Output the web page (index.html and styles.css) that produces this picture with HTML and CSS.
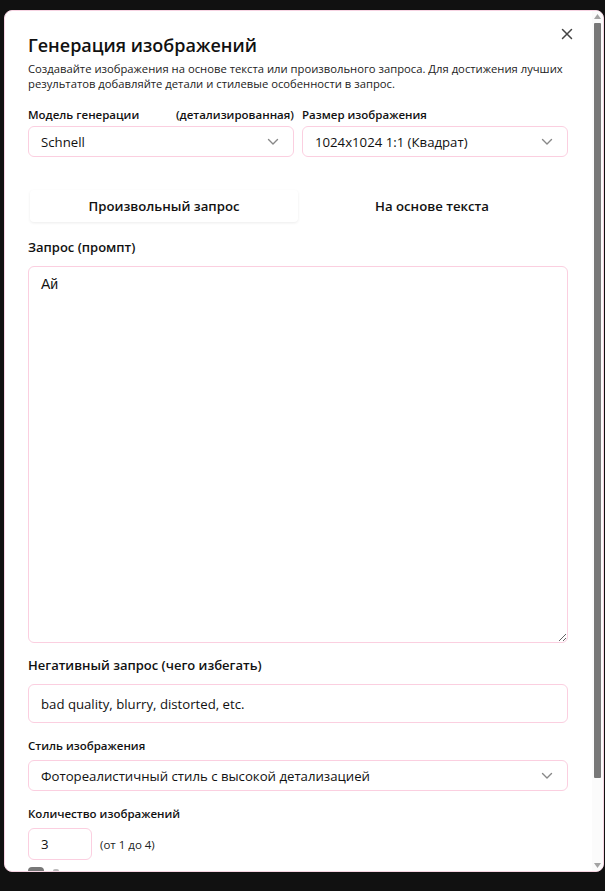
FILE: index.html
```html
<!DOCTYPE html>
<html lang="ru">
<head>
<meta charset="utf-8">
<title>Генерация изображений</title>
<link rel="stylesheet" href="styles.css">
</head>
<body>
<div class="overlay">
  <div class="dialog">
    <div class="content">
      <div class="dialog-inner">
        <button class="close" aria-label="Закрыть">
          <svg width="12" height="12" viewBox="0 0 12 12"><path d="M1.5 1.5 L10.5 10.5 M10.5 1.5 L1.5 10.5" stroke="#444" stroke-width="1.5" stroke-linecap="round" fill="none"/></svg>
        </button>
        <h2 class="title">Генерация изображений</h2>
        <p class="desc">Создавайте изображения на основе текста или произвольного запроса. Для достижения лучших результатов добавляйте детали и стилевые особенности в запрос.</p>

        <div class="grid2">
          <div class="field">
            <div class="label-row"><span class="label-sm">Модель генерации</span><span class="label-sm">(детализированная)</span></div>
            <div class="select"><span>Schnell</span>
              <svg class="chev" width="12" height="8" viewBox="0 0 12 8"><path d="M1.5 1.5 L6 6 L10.5 1.5" stroke="#888" stroke-width="1.4" fill="none" stroke-linecap="round" stroke-linejoin="round"/></svg>
            </div>
          </div>
          <div class="field">
            <div class="label-row"><span class="label-sm">Размер изображения</span></div>
            <div class="select"><span>1024x1024 1:1 (Квадрат)</span>
              <svg class="chev" width="12" height="8" viewBox="0 0 12 8"><path d="M1.5 1.5 L6 6 L10.5 1.5" stroke="#888" stroke-width="1.4" fill="none" stroke-linecap="round" stroke-linejoin="round"/></svg>
            </div>
          </div>
        </div>

        <div class="tabs">
          <button class="tab active">Произвольный запрос</button>
          <button class="tab">На основе текста</button>
        </div>

        <div class="label-md prompt-label">Запрос (промпт)</div>
        <textarea class="prompt">Ай</textarea>

        <div class="label-md neg-label">Негативный запрос (чего избегать)</div>
        <div class="input neg">bad quality, blurry, distorted, etc.</div>

        <div class="label-sm block-label">Стиль изображения</div>
        <div class="select"><span>Фотореалистичный стиль с высокой детализацией</span>
          <svg class="chev" width="12" height="8" viewBox="0 0 12 8"><path d="M1.5 1.5 L6 6 L10.5 1.5" stroke="#888" stroke-width="1.4" fill="none" stroke-linecap="round" stroke-linejoin="round"/></svg>
        </div>

        <div class="label-sm block-label">Количество изображений</div>
        <div class="count-row">
          <div class="input count">3</div>
          <span class="hint">(от 1 до 4)</span>
        </div>

        <div class="check-row">
          <span class="checkbox"></span>
          <span class="check-mark"></span>
        </div>
      </div>
    </div>
    <div class="scrollbar">
      <svg class="arrow" width="7" height="5" viewBox="0 0 7 5"><path d="M0 5 L3.5 0 L7 5 Z" fill="#a3a3a3"/></svg>
      <div class="thumb"></div>
      <div class="track-rest"></div>
      <svg class="arrow" width="7" height="5" viewBox="0 0 7 5"><path d="M0 0 L3.5 5 L7 0 Z" fill="#a3a3a3"/></svg>
    </div>
  </div>
</div>
</body>
</html>
```

FILE: styles.css
```css
* { box-sizing: border-box; }
html, body { margin: 0; padding: 0; }
body {
  background: #111111;
  font-family: "Open Sans", "Noto Sans", sans-serif;
  color: #111;
  width: 605px;
  height: 891px;
  overflow: hidden;
}
.overlay {
  padding: 10px 1px 0 4px;
}
.dialog {
  width: 600px;
  height: 862px;
  background: #fff;
  border: 1px solid #f6d3e2;
  border-radius: 8px;
  display: flex;
  overflow: hidden;
}
.content {
  flex: 1;
  min-width: 0;
  overflow: hidden;
  position: relative;
}
.scrollbar {
  width: 11px;
  flex: none;
  display: flex;
  flex-direction: column;
  align-items: center;
  padding: 3px 0 3px;
  background: #fbfbfb;
}
.arrow { flex: none; }
.thumb {
  width: 7px;
  height: 755px;
  margin-top: 4px;
  background: #787878;
  border-radius: 1px;
}
.track-rest { flex: 1; }

.dialog-inner {
  padding: 22px 24px 24px 23px;
  position: relative;
}
.close {
  position: absolute;
  top: 13px;
  right: 15px;
  width: 20px;
  height: 20px;
  border: 0;
  background: transparent;
  padding: 4px;
  display: flex;
  align-items: center;
  justify-content: center;
}
.title {
  margin: 0;
  font-size: 18px;
  line-height: 24px;
  font-weight: 600;
  color: #111;
}
.desc {
  margin: 4px 0 0;
  font-size: 11.25px;
  line-height: 15px;
  color: #222;
}
.grid2 {
  display: grid;
  grid-template-columns: 1fr 1fr;
  column-gap: 8px;
  margin-top: 16px;
}
.label-row {
  display: flex;
  justify-content: space-between;
  margin-bottom: 3px;
}
.label-sm {
  font-size: 11.5px;
  line-height: 16px;
  font-weight: 600;
  color: #111;
}
.label-md {
  font-size: 13px;
  line-height: 18px;
  font-weight: 600;
  color: #111;
}
.select {
  height: 31px;
  border: 1px solid #fbcfe0;
  border-radius: 6px;
  display: flex;
  align-items: center;
  justify-content: space-between;
  padding: 0 14px 0 12px;
  font-size: 13.2px;
  color: #111;
}
.chev { flex: none; }

.tabs {
  display: grid;
  grid-template-columns: 1fr 1fr;
  margin-top: 31px;
  padding: 2px;
  height: 36px;
  background: #fff;
  border-radius: 6px;
}
.tab {
  border: 0;
  background: transparent;
  font-family: inherit;
  font-size: 13.2px;
  font-weight: 600;
  color: #111;
  border-radius: 4px;
}
.tab.active {
  background: #fff;
  box-shadow: 0 1px 3px rgba(0,0,0,0.08);
}

.prompt-label { margin-top: 14px; }
.prompt {
  display: block;
  width: 100%;
  height: 377px;
  margin-top: 10px;
  border: 1px solid #fbcfe0;
  border-radius: 6px;
  padding: 9px 12px;
  font-family: "Liberation Sans", Arial, sans-serif;
  font-size: 14px;
  color: #111;
  resize: vertical;
  outline: none;
}
.neg-label { margin-top: 13px; }
.input {
  border: 1px solid #fbcfe0;
  border-radius: 6px;
  display: flex;
  align-items: center;
  padding: 0 12px;
  font-size: 13.2px;
  color: #111;
}
.neg {
  height: 39px;
  margin-top: 10px;
}
.block-label {
  margin-top: 15px;
  margin-bottom: 6px;
}
.count-row {
  display: flex;
  align-items: center;
  gap: 8px;
}
.count {
  width: 64px;
  height: 32px;
}
.hint {
  font-size: 11.5px;
  color: #222;
}
.check-row {
  display: flex;
  align-items: center;
  gap: 9px;
  margin-top: 7px;
}
.checkbox {
  width: 16px;
  height: 16px;
  border-radius: 4px;
  background: #777;
}
.check-mark {
  width: 6px;
  height: 12px;
  border-radius: 2px;
  background: #bbb;
}
```
